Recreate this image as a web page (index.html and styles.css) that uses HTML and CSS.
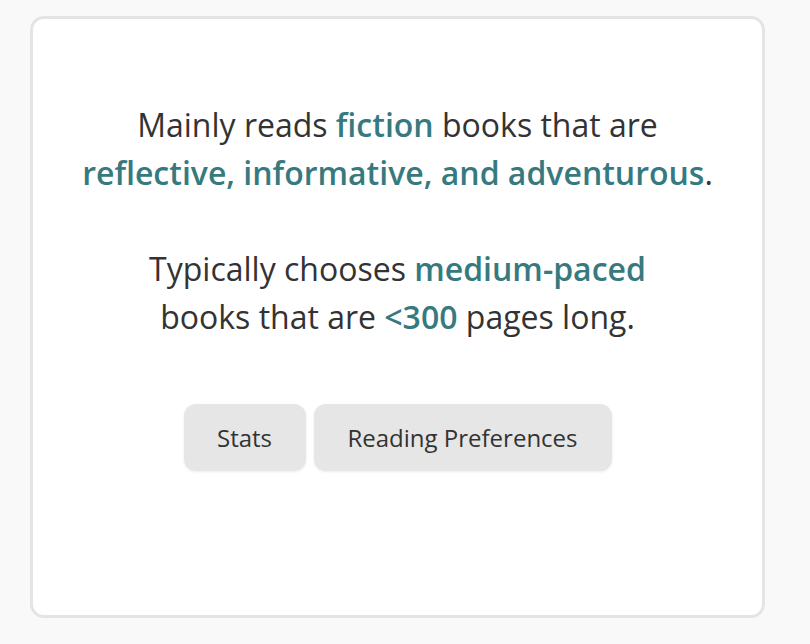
FILE: index.html
```html
<!DOCTYPE html>
<html>
<head>
<meta charset="utf-8">
<link rel="stylesheet" href="styles.css">
</head>
<body>
<div class="card">
  <p class="line">Mainly reads <span class="hl">fiction</span> books that are<br><span class="hl">reflective, informative, and adventurous</span>.</p>
  <p class="line">Typically chooses <span class="hl">medium-paced</span><br>books that are <span class="hl">&lt;300</span> pages long.</p>
  <div class="buttons">
    <button class="btn btn-stats">Stats</button>
    <button class="btn btn-prefs">Reading Preferences</button>
  </div>
</div>
</body>
</html>
```
FILE: styles.css
```css
html, body {
  margin: 0;
  padding: 0;
  background: #f9f9f9;
}
body {
  padding: 16px 0 0 30px;
  font-family: "Open Sans", "Noto Sans", sans-serif;
}
.card {
  box-sizing: border-box;
  width: 735px;
  height: 602px;
  background: #fff;
  border: 3px solid #e4e4e4;
  border-radius: 14px;
  padding-top: 82px;
  text-align: center;
  color: #333;
}
.line {
  margin: 0 0 48px;
  font-size: 32px;
  line-height: 48px;
}
.hl {
  color: #367a80;
  font-weight: 600;
}
.buttons {
  display: flex;
  justify-content: center;
  gap: 8px;
  margin-top: 63px;
}
.btn {
  font-family: inherit;
  font-size: 24px;
  color: #333;
  background: #e6e6e6;
  border: none;
  border-radius: 12px;
  height: 67px;
  padding: 0;
  box-shadow: 0 1px 3px rgba(0,0,0,0.08);
  cursor: pointer;
}
.btn-stats { width: 122px; }
.btn-prefs { width: 298px; }
```
